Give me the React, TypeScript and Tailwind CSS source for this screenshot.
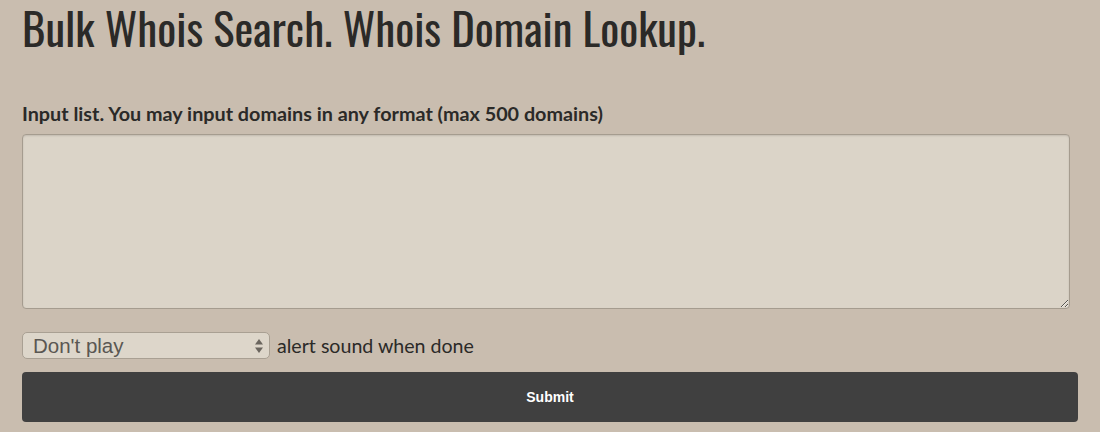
import React from "react";

export default function App() {
  return (
    <div className="min-h-[432px] w-full bg-[#c9bdaf] pl-[22px] pr-[22px] pt-[1px] overflow-hidden">
      <h1
        className="-mt-[7px] m-0 text-[44.7px] leading-[66px] text-[#2b2a28] font-normal whitespace-nowrap"
        style={{ fontFamily: '"Oswald", "Liberation Sans Narrow", "DejaVu Sans Condensed", sans-serif' }}
      >
        Bulk Whois Search. Whois Domain Lookup.
      </h1>
      <div
        className="mt-[41px] text-[19.8px] leading-[24px] font-bold text-[#2b2a28]"
        style={{ fontFamily: 'Lato, "Open Sans", sans-serif' }}
      >
        Input list. You may input domains in any format (max 500 domains)
      </div>
      <textarea className="mt-[9px] block w-[1048px] h-[175px] rounded-[4px] border border-[#a59c8f] bg-[#dbd4c8] shadow-[inset_0_1px_2px_rgba(0,0,0,0.12)] outline-none" />
      <div className="mt-[23px] flex items-center gap-[7px] h-[27px]">
        <div className="relative w-[248px] h-[27px] rounded-[5px] border border-[#a9a093] bg-[#ddd6ca] flex items-center">
          <span
            className="pl-[10px] text-[20.5px] leading-[24px] text-[#5a5752]"
            style={{ fontFamily: '"Liberation Sans", Arial, sans-serif' }}
          >
            Don't play
          </span>
          <svg className="absolute right-[5px] top-[5px]" width="10" height="16" viewBox="0 0 10 16">
            <path d="M5 1 L9 6.5 L1 6.5 Z" fill="#6a655e" />
            <path d="M5 15 L9 9.5 L1 9.5 Z" fill="#6a655e" />
          </svg>
        </div>
        <span
          className="text-[19.6px] leading-[24px] text-[#2b2a28]"
          style={{ fontFamily: 'Lato, "Open Sans", sans-serif' }}
        >
          alert sound when done
        </span>
      </div>
      <button
        className="mt-[13px] block w-[1056px] h-[50px] rounded-[4px] bg-[#404040] text-white text-[14px] font-bold"
        style={{ fontFamily: '"Liberation Sans", Arial, sans-serif' }}
      >
        Submit
      </button>
    </div>
  );
}
